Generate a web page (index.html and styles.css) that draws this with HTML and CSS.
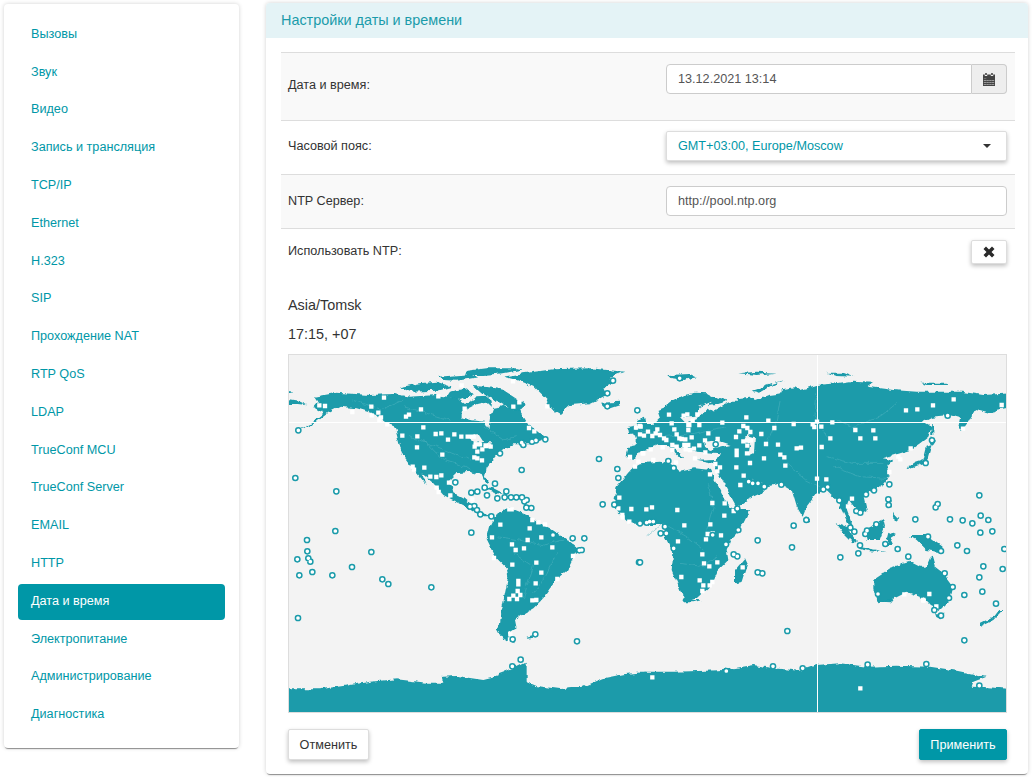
FILE: index.html
```html
<!DOCTYPE html>
<html lang="ru">
<head>
<meta charset="utf-8">
<title>Настройки даты и времени</title>
<link rel="stylesheet" href="styles.css">
</head>
<body>
<nav class="sidebar">
  <a class="nav-item">Вызовы</a>
  <a class="nav-item">Звук</a>
  <a class="nav-item">Видео</a>
  <a class="nav-item">Запись и трансляция</a>
  <a class="nav-item">TCP/IP</a>
  <a class="nav-item">Ethernet</a>
  <a class="nav-item">H.323</a>
  <a class="nav-item">SIP</a>
  <a class="nav-item">Прохождение NAT</a>
  <a class="nav-item">RTP QoS</a>
  <a class="nav-item">LDAP</a>
  <a class="nav-item">TrueConf MCU</a>
  <a class="nav-item">TrueConf Server</a>
  <a class="nav-item">EMAIL</a>
  <a class="nav-item">HTTP</a>
  <a class="nav-item active">Дата и время</a>
  <a class="nav-item">Электропитание</a>
  <a class="nav-item">Администрирование</a>
  <a class="nav-item">Диагностика</a>
</nav>
<main class="panel">
  <header class="panel-head">Настройки даты и времени</header>
  <div class="panel-body">
    <div class="rows">
      <div class="row row-date shaded">
        <div class="label">Дата и время:</div>
        <div class="control input-group">
          <div class="field joined">13.12.2021 13:14</div>
          <div class="addon">
            <svg class="icon-cal" viewBox="0 0 12 13"><path d="M2.200 0h1.600v2H2.200zM8.200 0h1.600v2H8.200z"/><path fill-rule="evenodd" d="M0 1.500h1.800v1.400h2.400V1.500h3.600v1.400h2.400V1.500H12V13H0zM.8 5.300v.1h2.500v-.1zM3.600 5.300h.1zM.8 7.400h2.500v-.5H.8zM3.600 7.400h2.200v-.5H3.600zM6.200 7.400h2.200v-.5H6.200zM8.700 7.400h2.500v-.5H8.700zM.8 9.500h2.500V9H.8zM3.600 9.500h2.200V9H3.600zM6.200 9.500h2.200V9H6.200zM8.700 9.500h2.500V9H8.700zM.8 11.600h2.500v-.5H.8zM3.600 11.600h2.200v-.5H3.600zM6.200 11.600h2.200v-.5H6.200zM8.700 11.600h2.500v-.5H8.700z"/></svg>
          </div>
        </div>
      </div>
      <div class="row row-zone">
        <div class="label">Часовой пояс:</div>
        <div class="control select"><span>GMT+03:00, Europe/Moscow</span><i class="caret"></i></div>
      </div>
      <div class="row row-ntp shaded">
        <div class="label">NTP Сервер:</div>
        <div class="control"><div class="field">http://pool.ntp.org</div></div>
      </div>
      <div class="row row-use">
        <div class="label">Использовать NTP:</div>
        <div class="control toggle-wrap">
          <button class="toggle"><svg class="icon-x" viewBox="0 0 12 12"><path d="M.5 3 3 .5 6 3.500 9 .5 11.500 3 8.500 6 11.500 9 9 11.500 6 8.500 3 11.500 .5 9 3.500 6z"/></svg></button>
        </div>
      </div>
    </div>
    <div class="zone-name">Asia/Tomsk</div>
    <div class="zone-time">17:15, +07</div>
    <div class="map">
      <svg class="map-svg" viewBox="289 355 717 357">
        <defs>
          <filter id="rough" x="-2%" y="-2%" width="104%" height="104%" filterUnits="objectBoundingBox">
            <feTurbulence type="fractalNoise" baseFrequency="0.14" numOctaves="3" seed="7" result="n"/>
            <feDisplacementMap in="SourceGraphic" in2="n" scale="5" xChannelSelector="R" yChannelSelector="G"/>
          </filter>
          <path id="z3land" d="M148 376h0M165 378h0M247 396h0M304 380h0M325 398h0M305 406h0M333 412h0M328 421h0M352 433h0M342 353h0M453 388h0M408 410h0M417 404h0M505 349h0M575 316h0M584 386h0M730 380h0M748 367h0M832 379h0M729 304h0M777 444h0M793 454h0M460 442h0M397 467h0M442 469h0M497 462h0M514 460h0M553 463h0M574 470h0M593 470h0M603 470h0M611 470h0M534 479h0M441 502h0M517 524h0M617 493h0M630 493h0M614 500h0M622 515h0M637 508h0M662 500h0M648 498h0M613 532h0M622 535h0M636 541h0M428 560h0M432 569h0M463 563h0M481 590h0M499 591h0M514 586h0M537 608h0M500 623h0M506 636h0M541 646h0M607 658h0M610 672h0M1048 653h0M1084 687h0M1045 685h0M1057 705h0M1058 712h0M1078 725h0M1108 731h0M691 734h0M725 688h0M718 688h0M779 745h0M787 720h0M805 727h0M825 733h0M1080 531h0M1105 545h0M1118 520h0M1095 560h0M1098 443h0M1112 440h0"/>
          <path id="z3sea" d="M85 451h0M76 594h0M199 634h0M987 537h0M1042 567h0M1045 594h0M998 673h0M1033 674h0M755 570h0M675 611h0M556 607h0M644 623h0M622 635h0M604 638h0M651 646h0M682 655h0M709 634h0M704 652h0M723 652h0M739 652h0M756 652h0M770 660h0M763 664h0M769 683h0M784 684h0M600 680h0M613 678h0M621 690h0M631 703h0M664 709h0M786 485h0M798 481h0M826 478h0M760 495h0M755 488h0M690 520h0M1029 302h0M1012 340h0M1012 379h0M1102 391h0"/>
          <path id="z5land" d="M666 22h0M726 43h0M737 60h0M762 55h0M773 30h0M814 22h0M847 52h0M672 84h0M727 104h0M799 98h0M814 128h0M797 160h0M745 153h0M745 163h0M743 183h0M730 197h0M751 195h0M718 207h0M741 207h0M787 211h0M799 210h0M862 147h0M909 78h0M721 313h0M720 328h0"/>
          <path id="z5sea" d="M111 30h0M112 64h0M82 88h0M115 85h0M121 95h0M127 126h0M88 136h0M187 136h0M246 111h0M304 66h0M337 148h0M355 162h0M484 172h0M84 264h0M196 3h0M604 8h0M849 15h0M908 25h0M943 25h0M928 61h0M935 60h0M1107 97h0M796 313h0M728 328h0M921 334h0M752 389h0M727 409h0"/>
          <path id="z4land" d="M87 194h0M131 197h0M142 193h0M172 193h0M95 220h0M178 225h0M145 225h0M158 212h0M247 218h0M319 202h0M385 212h0M403 234h0M461 222h0M531 215h0M518 223h0M523 231h0M544 230h0M577 217h0M646 240h0M700 241h0M571 265h0M661 265h0M706 265h0M798 181h0M832 178h0M879 166h0M941 148h0M1085 165h0M969 236h0M812 295h0M775 320h0M781 328h0M748 366h0M531 386h0M559 388h0M311 377h0M301 405h0M232 364h0M240 352h0M226 342h0M210 373h0M436 347h0M433 322h0M421 314h0M372 325h0M330 339h0M321 310h0M289 352h0M290 302h0M290 315h0M321 272h0M333 271h0M310 274h0M322 287h0M378 282h0M414 284h0M470 295h0M483 293h0M545 291h0M288 261h0M233 267h0M364 252h0M310 228h0M322 234h0M298 244h0M331 246h0M205 250h0M195 271h0M178 286h0M155 262h0M145 240h0M148 225h0M118 265h0M125 267h0M136 268h0M133 285h0M145 285h0M150 300h0M137 298h0M162 296h0M196 307h0M97 300h0M110 290h0M97 285h0M68 292h0M32 298h0M40 330h0M10 310h0M108 337h0M165 325h0M103 238h0M110 253h0M60 255h0M52 238h0M37 258h0M24 245h0M47 250h0M12 257h0M0 228h0M0 253h0M79 270h0M72 265h0M217 459h0M254 460h0M281 483h0M253 497h0M112 480h0M36 472h0M19 478h0M133 526h0M211 523h0M203 552h0M218 550h0M243 556h0M198 568h0M114 574h0M187 613h0M192 640h0M208 649h0M232 637h0M124 681h0M179 691h0M217 696h0M209 706h0M190 706h0M187 723h0M308 652h0M793 733h0M868 732h0M850 750h0M636 446h0M624 469h0M531 386h0M559 388h0"/>
          <path id="z4sea" d="M119 85h0M923 197h0M876 271h0M857 339h0M748 403h0M702 421h0M678 433h0M746 465h0M745 448h0M598 451h0M649 483h0M661 488h0M563 411h0M550 418h0M424 404h0M373 410h0M354 400h0M338 400h0M326 395h0M227 283h0M85 333h0M101 354h0M292 476h0M0 520h0M20 518h0M29 515h0M40 515h0M75 530h0M79 550h0M62 550h0M218 555h0M101 595h0M258 583h0M295 540h0M461 527h0M499 510h0M353 571h0M456 592h0M281 613h0M292 619h0M353 667h0M367 670h0M601 622h0M655 610h0M773 597h0M805 620h0M903 603h0M864 560h0M826 508h0M930 508h0M968 511h0M997 520h0M1022 497h0M1045 510h0M1057 544h0M1021 548h0M1018 436h0M893 462h0M887 472h0M952 586h0M981 603h0M1093 597h0M1030 649h0M1088 657h0M1018 682h0M1027 725h0M973 735h0M1068 761h0M938 711h0M927 744h0M914 670h0M714 732h0M889 770h0M736 582h0M660 586h0M643 545h0M631 533h0M681 542h0M676 552h0M709 523h0M0 637h0"/>
          <path id="z6land" d="M37 232h0M661 265h0M889 19h0M850 2h0"/>
          <path id="z6sea" d="M442 93h0M973 121h0M259 213h0M399 199h0M488 205h0M683 194h0M859 192h0M1018 257h0M903 47h0M883 30h0"/>
        </defs>
        <g filter="url(#rough)">
        <rect class="sea" x="260" y="330" width="770" height="400"/>
        <g transform="translate(270 280) scale(.33333)">
          <g class="land">
            <polygon points="700,290 760,280 850,268 960,265 1063,275 1020,290 1030,310 1000,325 1010,345 960,370 900,375 870,402 840,385 830,360 790,320 740,300"/>
            <polygon points="590,272 650,265 740,265 760,268 700,280 640,285 590,285"/>
            <polygon points="505,290 600,283 625,292 560,302 520,300"/>
            <polygon points="610,318 660,322 700,330 765,372 750,395 720,385 690,365 640,345"/>
            <polygon points="390,322 450,310 500,305 545,320 500,332 420,335"/>
            <polygon points="540,335 590,325 610,345 570,360 530,350"/>
            <polygon points="135,350 200,338 300,345 370,342 420,350 500,345 560,355 585,372 620,352 650,350 665,362 665,385 700,378 750,392 770,425 780,440 800,450 830,475 790,490 730,490 700,510 680,525 650,565 645,590 655,607 645,608 635,585 600,575 560,580 540,600 550,640 580,655 600,672 625,692 645,702 668,712 645,712 620,700 590,680 560,665 520,645 490,610 455,580 470,615 445,585 425,560 395,520 385,480 375,440 350,430 310,400 260,385 210,380 175,398 135,430 80,452 130,425 162,400 130,382 145,365"/>
            <polygon points="40,334 72,338 60,342 40,342"/>
            <polygon points="40,355 85,362 112,376 80,372 40,372"/>
            <polygon points="990,368 1050,365 1050,375 1020,385 1000,380"/>
            <polygon points="1100,420 1125,410 1130,440 1145,465 1120,470 1100,470 1115,450 1105,435"/>
            <polygon points="1072,445 1095,440 1095,460 1075,462"/>
            <polygon points="640,618 670,625 705,642 680,640 650,630"/>
            <polygon points="715,648 745,648 745,658 720,658"/>
          </g>
          <polygon class="sea" points="575,395 620,372 650,365 670,385 660,412 655,445 645,425 600,420 575,412"/>
          <polygon class="sea" points="600,470 625,462 640,485 610,490"/>
          <polygon class="sea" points="640,490 665,490 655,505 640,502"/>
          <polyline class="river" points="460,480 520,540 590,560 620,580"/>
          <polyline class="river" points="420,470 500,500 600,540"/>
          <polyline class="river" points="400,380 470,400 540,420"/>
          <polyline class="river" points="250,360 330,390 400,360"/>
          <polyline class="river" points="640,440 700,480 740,470"/>
        </g>
        <g transform="translate(270 530) scale(.33333)">
          <polygon class="land" points="680,-50 660,-10 650,30 670,70 680,85 710,115 715,140 705,190 695,240 690,280 682,300 695,325 735,340 715,310 740,295 735,270 755,255 790,235 815,210 840,175 860,150 890,125 910,85 925,55 900,35 870,15 840,-5 800,-25 770,-45 720,-65"/>
          <polygon class="land" points="770,320 790,315 790,320 772,323"/>
          <polygon class="land" points="20,478 150,478 240,465 300,455 380,448 470,458 520,458 515,440 560,438 640,450 680,440 685,430 740,410 770,395 770,455 800,468 870,477 940,470 1000,445 1060,433 1130,425 1150,430 1150,580 20,580"/>
          <polyline class="river" points="680,20 750,30 820,45 880,30"/>
          <polyline class="river" points="730,70 790,110 770,170 760,210"/>
          <polyline class="river" points="860,70 830,130 790,190"/>
        </g>
        <g transform="translate(640 600) scale(.33333)">
          <polygon class="land" points="0,215 100,215 200,212 250,210 340,195 400,205 480,212 530,195 600,190 680,200 770,197 870,200 950,212 1040,230 1000,245 995,260 1040,262 1120,267 1120,370 0,370"/>
          <polygon class="land" points="1075,30 1088,30 1060,60 1020,80 1020,70 1060,50"/>
          <polygon class="land" points="885,40 910,40 905,58 890,55"/>
          <polygon class="land" points="715,-10 765,-10 750,10 720,8"/>
          <polygon class="land" points="130,0 185,0 160,7 135,7"/>
        </g>
        <g transform="translate(640 350) scale(.33333)">
          <g class="land">
            <polygon points="52,180 75,170 100,150 130,135 165,128 205,130 225,140 265,152 225,165 195,170 215,185 250,165 270,155 295,155 290,145 330,140 345,150 385,135 425,130 425,118 465,112 480,120 530,105 590,100 640,92 700,95 680,110 720,115 760,120 830,125 870,125 925,125 965,125 1030,135 1120,130 1120,170 1070,180 1050,192 1005,180 985,215 965,243 955,228 960,205 925,195 875,200 845,215 875,232 865,260 840,280 810,300 770,312 728,325 760,330 742,345 750,370 735,400 700,420 670,435 680,480 665,490 645,470 630,450 620,480 638,528 625,522 605,480 590,450 560,420 530,430 500,470 488,500 470,470 455,420 420,400 380,410 365,430 320,450 290,470 285,462 238,375 222,342 170,332 230,330 240,310 170,305 130,295 100,290 130,325 115,320 80,285 55,285 20,300 0,305 -20,330 -40,320 -35,290 -10,285 -10,260 -25,250 0,225 40,225 60,205 55,190"/>
            <polygon points="-20,350 0,340 60,335 100,345 120,365 165,355 210,360 222,385 268,470 290,480 330,480 300,540 270,570 260,600 265,630 235,660 218,700 170,745 135,757 120,720 95,660 100,610 75,560 75,525 30,525 -30,520 -50,500 -80,470 -70,410"/>
            <polygon points="315,625 322,640 305,695 285,700 285,660"/>
            <polygon points="497,498 510,505 508,518 495,515"/>
            <polygon points="875,285 870,300 860,335 800,360 805,345 850,330 860,290"/>
            <polygon points="872,262 888,272 880,285 870,280"/>
            <polygon points="873,225 880,228 880,258 874,258"/>
            <polygon points="680,535 730,510 735,530 720,570 680,570 675,550"/>
            <polygon points="590,520 620,530 650,575 640,580 610,550"/>
            <polygon points="655,590 710,600 740,606 690,604 655,596"/>
            <polygon points="745,545 765,555 750,565 760,585 745,585 740,565"/>
            <polygon points="810,555 860,555 905,590 900,606 860,600 830,570"/>
            <polygon points="740,445 755,450 755,472 742,475"/>
            <polygon points="760,485 778,505 765,515"/>
            <polygon points="700,690 760,650 810,635 840,650 860,650 875,615 885,650 910,670 940,710 930,750 900,780 870,765 850,745 800,725 750,750 715,760 700,720"/>
            <polygon points="85,75 150,72 170,82 130,90 95,85"/>
            <polygon points="295,70 350,65 410,68 350,75"/>
            <polygon points="335,122 400,100 435,90 400,105 360,128"/>
            <polygon points="562,68 610,68 640,80 590,78"/>
            <polygon points="838,98 920,98 925,105 860,105"/>
          </g>
          <polygon class="sea" points="195,275 230,270 275,285 250,290 210,300 198,290"/>
          <polygon class="sea" points="322,255 345,262 342,310 325,318 330,285 318,270"/>
          <polygon class="sea" points="120,205 170,200 178,170 215,155 200,180 175,205 135,220"/>
          <polygon class="sea" points="335,385 370,405 350,395"/>
          <polyline class="river" points="420,150 410,210 380,280"/>
          <polyline class="river" points="530,130 525,200 560,260"/>
          <polyline class="river" points="770,160 720,200 640,230 590,210"/>
          <polyline class="river" points="560,320 640,340 730,340"/>
          <polyline class="river" points="580,350 660,380 740,385"/>
          <polyline class="river" points="440,340 500,390 540,410"/>
          <polyline class="river" points="20,560 70,520 140,560 190,600"/>
          <polyline class="river" points="205,400 220,470 200,540"/>
          <polyline class="river" points="120,640 190,650 230,620"/>
          <polyline class="river" points="0,240 70,260 160,250 260,230"/>
        </g>
        </g>
        <line class="cross" x1="289" x2="1006" y1="422.500" y2="422.500"/>
        <line class="cross" x1="817.500" x2="817.500" y1="355" y2="712"/>
        <g transform="translate(270 280) scale(.33333)">
          <use href="#z3land" class="dot"/><use href="#z3sea" class="ring-o"/><use href="#z3sea" class="ring-i"/>
        </g>
        <g transform="translate(270 530) scale(.33333)">
          <use href="#z5land" class="dot"/><use href="#z5sea" class="ring-o"/><use href="#z5sea" class="ring-i"/>
        </g>
        <g transform="translate(640 350) scale(.33333)">
          <use href="#z4land" class="dot"/><use href="#z4sea" class="ring-o"/><use href="#z4sea" class="ring-i"/>
        </g>
        <g transform="translate(640 600) scale(.33333)">
          <use href="#z6land" class="dot"/><use href="#z6sea" class="ring-o"/><use href="#z6sea" class="ring-i"/>
        </g>
      </svg>
    </div>
    <div class="actions">
      <button class="btn">Отменить</button>
      <button class="btn primary">Применить</button>
    </div>
  </div>
</main>
</body>
</html>
```
FILE: styles.css
```css
* { box-sizing: border-box; }
html, body { margin: 0; height: 777px; overflow: hidden; }
body {
  display: flex;
  align-items: flex-start;
  background: #fff;
  font-family: "Liberation Sans", Arial, sans-serif;
  font-size: 12.650px;
  line-height: 18.570px;
  color: #333;
}
.sidebar {
  width: 235px;
  height: 744px;
  margin: 4px 0 0 4px;
  padding: 13.400px 14px 0;
  display: flex;
  flex-direction: column;
  gap: 1.800px;
  background: #fff;
  border-radius: 4px;
  box-shadow: 0 0 4px rgba(0,0,0,.18), 0 2px 1px -1px rgba(0,0,0,.4);
}
.nav-item {
  display: block;
  height: 36px;
  padding: 7.500px 13px 0;
  color: #0097a7;
  border-radius: 4px;
  white-space: nowrap;
}
.nav-item.active { background: #0097a7; color: #fff; }
.panel {
  width: 762px;
  height: 771px;
  margin: 3px 0 0 27px;
  background: #fff;
  border-radius: 4px;
  box-shadow: 0 0 4px rgba(0,0,0,.18), 0 2px 1px -1px rgba(0,0,0,.4);
  overflow: hidden;
}
.panel-head {
  height: 35px;
  padding: 8px 15px;
  background: #e4f3f6;
  color: #1a9baa;
  font-size: 14.400px;
}
.panel-body { padding: 14px 14px 0 15px; }
.rows { width: 734px; }
.row {
  display: flex;
  justify-content: space-between;
  padding: 0 8px 0 7px;
  border-top: 1px solid #ddd;
}
.row.shaded { background: #f9f9f9; }
.row-date { height: 68px; padding-top: 11px; }
.row-zone { height: 54px; padding-top: 10px; }
.row-ntp { height: 54px; padding-top: 11px; }
.row-use { height: 52px; padding-top: 11px; }
.row-date .label { padding-top: 12px; }
.row-zone .label { padding-top: 6px; }
.row-ntp .label { padding-top: 6px; }
.row-use .label { padding-top: 2px; }
.control { width: 341px; }
.input-group { display: flex; height: 30px; }
.field {
  height: 30px;
  padding: 5px 11px 0;
  background: #fff;
  border: 1px solid #ccc;
  border-radius: 4px;
  color: #555;
}
.field.joined { flex: 1; border-radius: 4px 0 0 4px; }
.addon {
  width: 35px;
  display: flex;
  align-items: center;
  justify-content: center;
  background: #eee;
  border: 1px solid #ccc;
  border-left: 0;
  border-radius: 0 4px 4px 0;
}
.icon-cal { width: 12px; height: 13px; fill: #444; }
.select {
  height: 30px;
  display: flex;
  align-items: center;
  justify-content: space-between;
  padding: 0 15px 0 11px;
  background: #fff;
  border: 1px solid #ddd;
  border-radius: 2px;
  color: #0097a7;
  box-shadow: 0 2px 4px rgba(0,0,0,.25);
}
.caret {
  width: 0;
  height: 0;
  border-top: 4px solid #333;
  border-left: 4px solid transparent;
  border-right: 4px solid transparent;
}
.toggle-wrap { display: flex; justify-content: flex-end; }
.toggle {
  width: 36px;
  height: 24px;
  padding: 0;
  display: flex;
  align-items: center;
  justify-content: center;
  background: #fff;
  border: 1px solid #ddd;
  border-radius: 2px;
  box-shadow: 0 2px 4px rgba(0,0,0,.25);
}
.icon-x { width: 12px; height: 12px; fill: #2a2a2a; }
.zone-name, .zone-time {
  padding-left: 7px;
  font-size: 14.400px;
  line-height: 20px;
}
.zone-name { margin-top: 15px; }
.zone-time { margin-top: 9px; }
.map {
  width: 719px;
  height: 359px;
  margin: 10px 0 0 7px;
  border: 1px solid #ddd;
  background: #f3f3f3;
}
.map-svg { display: block; width: 717px; height: 357px; }
.land polygon, polygon.land { fill: #1a9baa; }
.sea { fill: #f3f3f3; }
.river { fill: none; stroke: #55b5c1; stroke-width: 1.500; }
.cross { stroke: #fff; stroke-width: 1; }
.dot { fill: none; stroke: #fff; stroke-width: 13; stroke-linecap: square; }
.ring-o { fill: none; stroke: #1a9baa; stroke-width: 20; stroke-linecap: round; }
.ring-i { fill: none; stroke: #fff; stroke-width: 11; stroke-linecap: round; }
.actions {
  width: 719px;
  margin: 16px 0 0 7px;
  display: flex;
  justify-content: space-between;
}
.btn {
  width: 81px;
  height: 31px;
  padding: 0;
  font: 12.650px "Liberation Sans", Arial, sans-serif;
  color: #333;
  background: #fff;
  border: 1px solid #ddd;
  border-radius: 2px;
  box-shadow: 0 2px 4px rgba(0,0,0,.25);
}
.btn.primary {
  width: 88px;
  background: #0097a7;
  border-color: #0097a7;
  color: #fff;
}
```
